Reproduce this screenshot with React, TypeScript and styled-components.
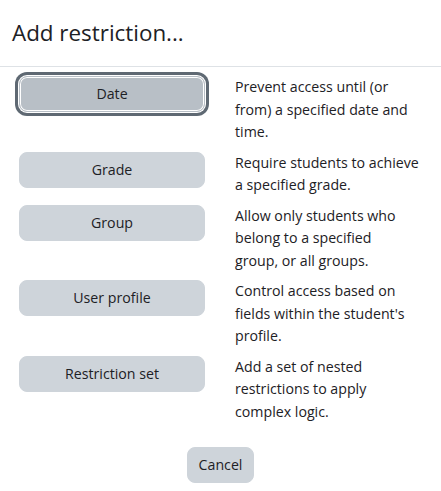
import React from "react";
import styled, { createGlobalStyle } from "styled-components";

interface IRestriction {
  label: string;
  lines: Array<string>;
  focused?: boolean;
}

// description lines are kept as they wrap in the dialog
const restrictions: Array<IRestriction> = [
  { label: "Date", lines: ["Prevent access until (or", "from) a specified date and", "time."], focused: true },
  { label: "Grade", lines: ["Require students to achieve", "a specified grade."] },
  { label: "Group", lines: ["Allow only students who", "belong to a specified", "group, or all groups."] },
  { label: "User profile", lines: ["Control access based on", "fields within the student's", "profile."] },
  { label: "Restriction set", lines: ["Add a set of nested", "restrictions to apply", "complex logic."] }
];

const GlobalStyle = createGlobalStyle`
  html, body {
    margin: 0;
    padding: 0;
    background: #fff;
  }
  body {
    font-family: "Open Sans", "Noto Sans", "Liberation Sans", sans-serif;
    color: #1d2125;
  }
`;

const App = () => (
  <>
    <GlobalStyle />
    <Dialog>
      <Header>
        <Title>Add restriction...</Title>
      </Header>
      <Body>
        {restrictions.map(r => (
          <Row key={r.label}>
            <ButtonCell>
              <OptionButton focused={!!r.focused}>{r.label}</OptionButton>
            </ButtonCell>
            <Description>
              {r.lines.map((line, i) => (
                <Line key={i.toString()}>{line}</Line>
              ))}
            </Description>
          </Row>
        ))}
      </Body>
      <Footer>
        <SecondaryButton>Cancel</SecondaryButton>
      </Footer>
    </Dialog>
  </>
);

const Dialog = styled.div`
  width: 441px;
  height: 491px;
  display: flex;
  flex-direction: column;
  overflow: hidden;
`;

const Header = styled.div`
  height: 67px;
  border-bottom: 1px solid #dee2e6;
  display: flex;
  align-items: center;
  padding: 0 12px;
  box-sizing: border-box;
`;

const Title = styled.h5`
  margin: 0;
  font-size: 22.4px;
  font-weight: 400;
  line-height: 1.2;
  padding-top: 1px;
`;

const Body = styled.div`
  padding: 9px 19px 0;
  display: flex;
  flex-direction: column;
  gap: 8px;
`;

const Row = styled.div`
  display: grid;
  grid-template-columns: 186px 186px;
  column-gap: 30px;
  align-items: start;
`;

const ButtonCell = styled.div`
  display: flex;
`;

const BaseButton = styled.button`
  font-family: inherit;
  font-size: 14.2px;
  line-height: 22px;
  color: #1d2125;
  background: #ced4da;
  border: 1px solid #ced4da;
  border-radius: 8px;
  padding: 6px 12px;
  height: 36px;
  cursor: pointer;
`;

const OptionButton = styled(BaseButton)<{ focused: boolean }>`
  width: 100%;
  ${props =>
    props.focused &&
    `
    background: #b8bfc6;
    border-color: #b8bfc6;
    box-shadow: inset 0 0 0 1px #fff, 0 0 0 1px #fff, 0 0 0 4px #5f6973;
  `}
`;

const Description = styled.div`
  font-size: 14.2px;
  line-height: 22.5px;
`;

const Line = styled.span`
  display: block;
  white-space: nowrap;
`;

const Footer = styled.div`
  display: flex;
  justify-content: center;
  padding-top: 24px;
`;

const SecondaryButton = styled(BaseButton)`
  padding: 6px 11px;
`;

export default App;
